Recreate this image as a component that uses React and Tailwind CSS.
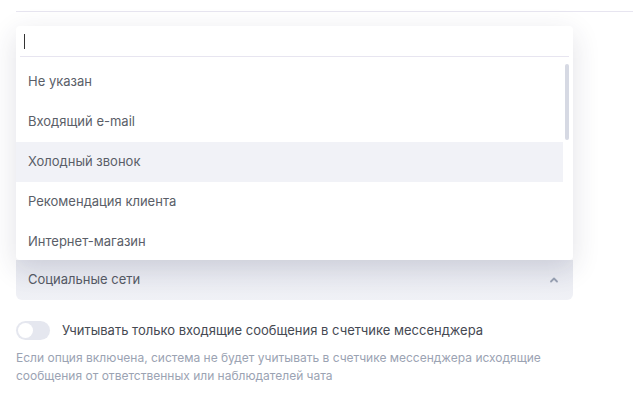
import React from "react";

const items = [
  "Не указан",
  "Входящий e-mail",
  "Холодный звонок",
  "Рекомендация клиента",
  "Интернет-магазин",
];

export default function App() {
  return (
    <div
      className="w-[633px] h-[401px] bg-white overflow-hidden relative"
      style={{ fontFamily: "Inter, 'Noto Sans', sans-serif" }}
    >
      <div className="ml-4 mt-[11px] h-px bg-[#e7e5f0]" />
      <div className="pl-4 pr-[60px] pt-[14px]">
        <div className="relative">
          {/* select field */}
          <div className="h-[234px]" />
          <div className="h-[40px] rounded-b-[6px] bg-gradient-to-b from-[#e6e8ef] to-[#f0f1f6] flex items-center justify-between pl-3 pr-[12px] text-[13px] text-[#555a64]">
            <span>Социальные сети</span>
            <svg width="10" height="8" viewBox="0 0 10 8" className="mr-[2px]">
              <path d="M2 5.5 L5 2.5 L8 5.5" fill="none" stroke="#98a1b3" strokeWidth="1.8" strokeLinecap="round" strokeLinejoin="round" />
            </svg>
          </div>
          {/* dropdown */}
          <div className="absolute left-0 top-0 w-full h-[234px] bg-white rounded-[4px] shadow-[0_8px_28px_rgba(40,45,80,0.14)] overflow-hidden">
            <div className="h-[31px] mx-1 border-b border-[#e7e5f0] flex items-center px-1">
              <div className="w-px h-[15px] bg-[#333]" />
            </div>
            <div className="relative pt-[5px]">
              {items.map((t, i) => (
                <div
                  key={t}
                  className={
                    "h-[40px] flex items-center pl-3 mr-[10px] text-[13px] text-[#5a5e68] " +
                    (i === 2 ? "bg-[#f1f2f7]" : "")
                  }
                >
                  {t}
                </div>
              ))}
              <div className="absolute right-[4px] top-[7px] w-[4px] h-[76px] rounded-full bg-[#d6d9e3]" />
            </div>
          </div>
        </div>
        {/* toggle */}
        <div className="mt-[21px] flex items-center gap-3">
          <div className="w-[34px] h-[19px] rounded-full bg-[#e5e7ef] relative shrink-0">
            <div className="absolute left-[2px] top-[2px] w-[15px] h-[15px] rounded-full bg-white" />
          </div>
          <span className="text-[13px] text-[#454952]">
            Учитывать только входящие сообщения в счетчике мессенджера
          </span>
        </div>
        <p className="mt-[8px] text-[12px] leading-[18px] text-[#9ba3b3]">
          Если опция включена, система не будет учитывать в счетчике мессенджера исходящие сообщения от ответственных или наблюдателей чата
        </p>
      </div>
    </div>
  );
}
